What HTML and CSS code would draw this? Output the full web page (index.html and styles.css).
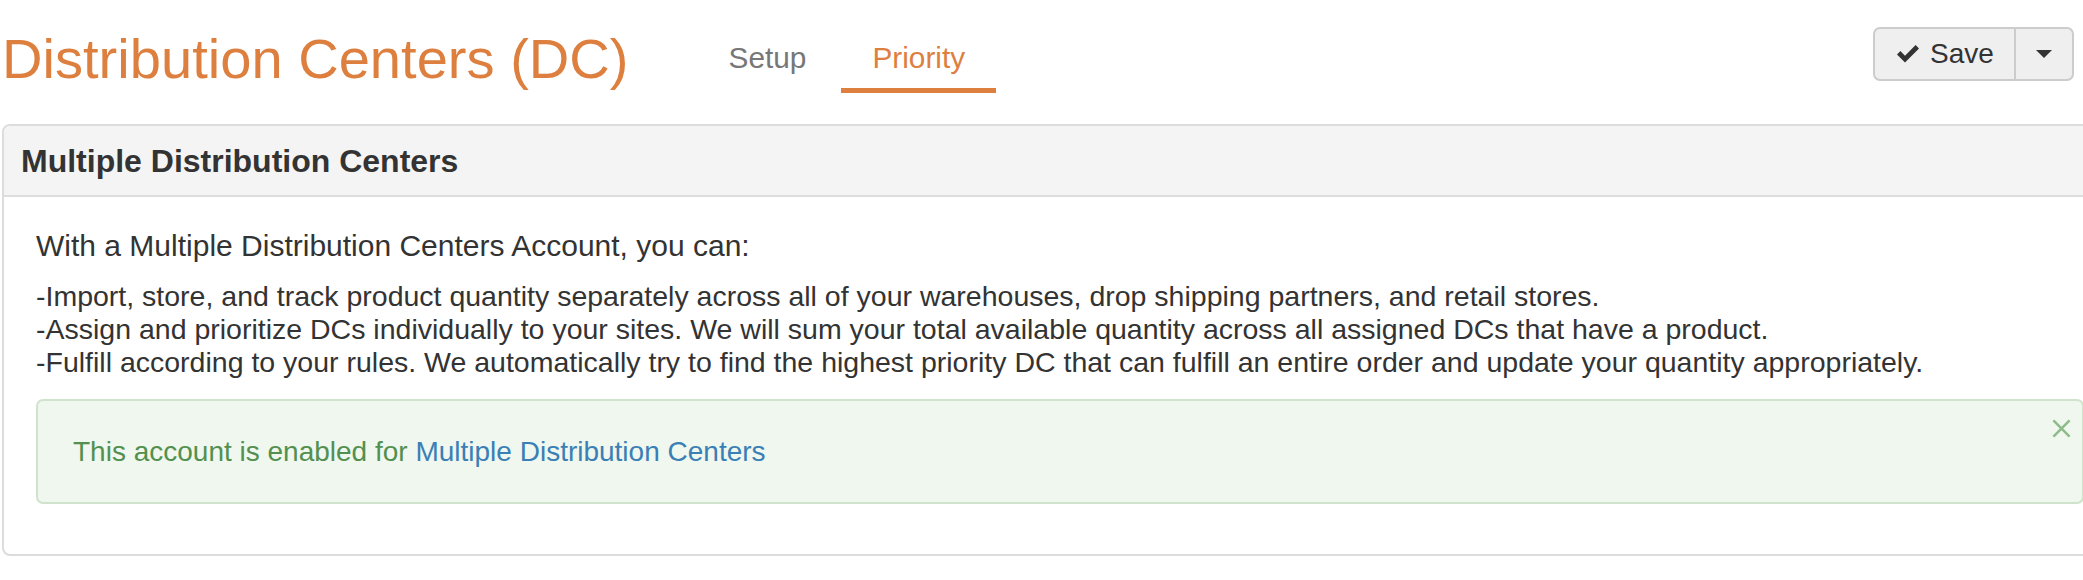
FILE: index.html
```html
<!DOCTYPE html>
<html lang="en">
<head>
<meta charset="utf-8">
<title>Distribution Centers (DC)</title>
<link rel="stylesheet" href="styles.css">
</head>
<body>
<div class="page">
  <header class="header">
    <h1 class="title">Distribution Centers (DC)</h1>
    <nav class="tabs">
      <a class="tab">Setup</a>
      <a class="tab tab-active">Priority</a>
    </nav>
    <div class="spacer"></div>
    <div class="btn-group">
      <button class="btn btn-save">
        <svg class="icon-check" viewBox="0 0 24 20" width="24" height="20" aria-hidden="true">
          <path d="M1 10.5 L4.4 7.1 L9 11.7 L19.6 1.1 L23 4.5 L9 18.5 Z" fill="#333"/>
        </svg>
        <span>Save</span>
      </button>
      <button class="btn btn-caret" aria-label="More">
        <span class="caret"></span>
      </button>
    </div>
    <button class="btn btn-more"></button>
  </header>

  <section class="panel">
    <div class="panel-heading">
      <h3 class="panel-title">Multiple Distribution Centers</h3>
    </div>
    <div class="panel-body">
      <p class="intro">With a Multiple Distribution Centers Account, you can:</p>
      <p class="features">-Import, store, and track product quantity separately across all of your warehouses, drop shipping partners, and retail stores.<br>-Assign and prioritize DCs individually to your sites. We will sum your total available quantity across all assigned DCs that have a product.<br>-Fulfill according to your rules. We automatically try to find the highest priority DC that can fulfill an entire order and update your quantity appropriately.</p>
      <div class="alert">
        <span class="alert-text">This account is enabled for <a class="alert-link">Multiple Distribution Centers</a></span>
        <button class="close" aria-label="Close">
          <svg viewBox="0 0 20 20" width="19" height="19" aria-hidden="true">
            <path d="M1.5 1.5 L18.5 18.5 M18.5 1.5 L1.5 18.5" stroke="#8dbb89" stroke-width="2.6" fill="none"/>
          </svg>
        </button>
      </div>
    </div>
  </section>
</div>
</body>
</html>
```

FILE: styles.css
```css
html, body {
  margin: 0;
  padding: 0;
  overflow: hidden;
  background: #ffffff;
}

body {
  font-family: "Liberation Sans", Helvetica, Arial, sans-serif;
  color: #333333;
}

.page {
  width: 2118px;
  padding-left: 2px;
  box-sizing: border-box;
}

.header {
  display: flex;
  align-items: flex-start;
  height: 124px;
}

.title {
  margin: 28px 0 0 0;
  font-size: 56.1px;
  line-height: 61px;
  font-weight: normal;
  color: #dd803f;
  white-space: nowrap;
}

.tabs {
  display: flex;
  gap: 4px;
  margin: 38px 0 0 69px;
}

.tab {
  display: block;
  padding: 0 31px 10px;
  font-size: 29.8px;
  line-height: 40px;
  color: #777777;
  border-bottom: 5px solid transparent;
}

.tab-active {
  color: #dd803f;
  border-bottom-color: #dd803f;
}

.spacer {
  flex: 1;
}

.btn-group {
  display: flex;
  margin-top: 27px;
}

.btn {
  font-family: inherit;
  display: flex;
  align-items: center;
  height: 54px;
  margin: 0;
  background: #efefef;
  border: 2px solid #cccccc;
  color: #333333;
  box-sizing: border-box;
}

.btn-save {
  width: 143px;
  padding: 0 0 0 21px;
  gap: 10px;
  border-radius: 7px 0 0 7px;
  font-size: 28px;
}

.btn-caret {
  width: 58px;
  justify-content: center;
  border-left: none;
  border-radius: 0 7px 7px 0;
  padding: 0;
}

.caret {
  width: 0;
  height: 0;
  border-left: 8px solid transparent;
  border-right: 8px solid transparent;
  border-top: 8px solid #333333;
}

.btn-more {
  width: 34px;
  margin: 27px 0 0 10px;
  border-radius: 7px;
}

.panel {
  border: 2px solid #dcdcdc;
  border-radius: 8px;
  background: #ffffff;
}

.panel-heading {
  background: #f4f4f4;
  border-bottom: 2px solid #dddddd;
  border-radius: 6px 6px 0 0;
  padding: 18px 17px;
  height: 71px;
  box-sizing: border-box;
}

.panel-title {
  margin: 0;
  font-size: 32px;
  line-height: 35px;
  font-weight: bold;
  color: #333333;
}

.panel-body {
  padding: 32px 32px 32px 32px;
  font-size: 28.5px;
  line-height: 33px;
}

.intro {
  margin: 0 0 18px 0;
  font-size: 30px;
}

.features {
  margin: 0 0 20px 0;
}

.alert {
  position: relative;
  background: #eff7ee;
  border: 2px solid #d0e3cc;
  border-radius: 7px;
  padding: 34px 35px;
  margin-bottom: 18px;
  font-size: 28px;
  color: #53904f;
}

.alert-link {
  color: #3a7fb5;
}

.close {
  position: absolute;
  top: 18px;
  right: 11px;
  padding: 0;
  margin: 0;
  border: none;
  background: transparent;
  line-height: 0;
}
```
